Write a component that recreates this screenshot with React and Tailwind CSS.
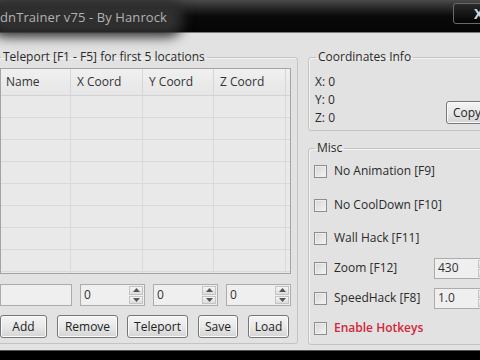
import React from "react";

function Arrow({ up }) {
  return (
    <svg width="7" height="4" viewBox="0 0 7 4">
      {up ? <path d="M0 4 L3.5 0 L7 4 Z" fill="#555" /> : <path d="M0 0 L3.5 4 L7 0 Z" fill="#555" />}
    </svg>
  );
}

function Spin({ value, className = "", h = "h-[22px]" }) {
  return (
    <div className={`flex ${h} border border-[#acacac] bg-[#efefef] ${className}`}>
      <div className="flex-1 flex items-center pl-[3px] text-[12px] text-[#333]">{value}</div>
      <div className="w-[16px] flex flex-col p-[1px] gap-[1px]">
        <div className="flex-1 flex items-center justify-center border border-[#c4c4c4] bg-gradient-to-b from-[#f6f6f6] to-[#dcdcdc]">
          <Arrow up />
        </div>
        <div className="flex-1 flex items-center justify-center border border-[#c4c4c4] bg-gradient-to-b from-[#f6f6f6] to-[#dcdcdc]">
          <Arrow />
        </div>
      </div>
    </div>
  );
}

function Btn({ children, className = "" }) {
  return (
    <div
      className={`h-[23px] flex items-center justify-center rounded-[3px] border border-[#767676] bg-gradient-to-b from-[#f4f4f4] via-[#e9e9e9] to-[#d4d4d4] shadow-[inset_0_0_0_1px_#fbfbfb] text-[12px] text-[#222] ${className}`}
    >
      {children}
    </div>
  );
}

function Check({ label, red = false, children }) {
  return (
    <div className="h-[22px] flex items-center">
      <div className="w-[13px] h-[13px] border border-[#8e8e8e] bg-gradient-to-br from-[#d6d6d6] to-[#f4f4f4] shadow-[inset_0_0_0_1px_#eeeeee]" />
      <div
        className={`ml-[7px] text-[12px] ${children ? "w-[100px]" : ""} ${
          red ? "text-[#d4253a] font-semibold" : "text-[#2a2a2a]"
        }`}
      >
        {label}
      </div>
      {children}
    </div>
  );
}

const cols = "grid grid-cols-[70px_72px_71px_72px_1fr]";

export default function App() {
  const rows = Array.from({ length: 9 });
  return (
    <div className="w-[480px] h-[360px] overflow-hidden bg-black font-['Open_Sans',sans-serif] flex flex-col">
      {/* Title bar */}
      <div className="h-[33px] shrink-0 flex items-center pt-[3px] relative bg-gradient-to-b from-[#4a4a4a] via-[#0a0a0a] to-[#050505] border-b border-[#7a7a7a]">
        <div className="h-[18px] flex items-center pr-[6px] bg-[#2f2f2f] shadow-[0_0_12px_10px_#2f2f2f] rounded-[6px]">
          <span className="text-[13px] text-[#b2b2b2] tracking-[0.1px]">dnTrainer v75 - By Hanrock</span>
        </div>
        <div className="absolute left-[453px] top-[3px] w-[40px] h-[21px] rounded-[3px] border border-[#6a6a6a] bg-gradient-to-b from-[#2a2a2a] to-[#050505] flex items-center pl-[20px]">
          <span className="text-[14px] font-bold text-[#d8d8d8]">X</span>
        </div>
      </div>

      {/* Body */}
      <div className="h-[317px] shrink-0 bg-[#e2e2e2] flex overflow-hidden pt-[16px] text-[#2a2a2a]">
        {/* Left group */}
        <fieldset className="-ml-[6px] w-[304px] shrink-0 h-[295px] border border-[#c3c3c3] rounded-[3px] shadow-[inset_1px_1px_0_#f4f4f4] pl-[5px] pr-[6px] pb-[5px] flex flex-col">
          <legend className="ml-[1px] px-[2px] text-[12px] leading-[16px] text-[#2a2a2a]">
            Teleport [F1 - F5] for first 5 locations
          </legend>
          <div className="mt-[3px] h-[207px] border border-[#a4a4a4] bg-[#e9e9e9] overflow-hidden flex flex-col">
            <div className={`${cols} h-[27px] shrink-0 bg-gradient-to-b from-[#f0f0f0] to-[#e6e6e6] border-b border-[#d2d2d2] text-[12px] text-[#333]`}>
              <div className="pl-[5px] flex items-center border-r border-[#d6d6d6]">Name</div>
              <div className="pl-[6px] flex items-center border-r border-[#d6d6d6]">X Coord</div>
              <div className="pl-[6px] flex items-center border-r border-[#d6d6d6]">Y Coord</div>
              <div className="pl-[6px] flex items-center border-r border-[#d6d6d6]">Z Coord</div>
              <div />
            </div>
            {rows.map((_, i) => (
              <div key={i} className={`${cols} h-[22px] shrink-0 border-b border-[#d9d9d9]`}>
                <div className="border-r border-[#d9d9d9]" />
                <div className="border-r border-[#d9d9d9]" />
                <div className="border-r border-[#d9d9d9]" />
                <div className="border-r border-[#d9d9d9]" />
                <div />
              </div>
            ))}
          </div>
          <div className="mt-[10px] flex">
            <div className="w-[72px] h-[22px] border border-[#acacac] bg-[#efefef]" />
            <Spin value="0" className="ml-[8px] w-[65px]" />
            <Spin value="0" className="ml-[8px] w-[65px]" />
            <Spin value="0" className="ml-[8px] w-[65px]" />
          </div>
          <div className="mt-[9px] flex">
            <Btn className="w-[47px]">Add</Btn>
            <Btn className="ml-[10px] w-[61px]">Remove</Btn>
            <Btn className="ml-[9px] w-[61px]">Teleport</Btn>
            <Btn className="ml-[10px] w-[40px]">Save</Btn>
            <Btn className="ml-[10px] w-[41px]">Load</Btn>
          </div>
        </fieldset>

        {/* Right column */}
        <div className="ml-[10px] w-[200px] shrink-0 flex flex-col">
          <fieldset className="h-[82px] border border-[#c3c3c3] rounded-[3px] shadow-[inset_1px_1px_0_#f4f4f4] pl-[6px] flex">
            <legend className="ml-[1px] px-[2px] text-[12px] leading-[16px]">Coordinates Info</legend>
            <div className="mt-[8px] w-[131px] flex flex-col text-[12px] leading-[18px]">
              <div>X: 0</div>
              <div>Y: 0</div>
              <div>Z: 0</div>
            </div>
            <Btn className="mt-[36px] w-[60px] h-[22px] !justify-start pl-[6px]">Copy</Btn>
          </fieldset>
          <fieldset className="mt-[9px] h-[205px] border border-[#c3c3c3] rounded-[3px] shadow-[inset_1px_1px_0_#f4f4f4] pl-[5px] flex flex-col">
            <legend className="ml-[1px] px-[2px] text-[12px] leading-[16px]">Misc</legend>
            <div className="mt-[4px]">
              <Check label="No Animation [F9]" />
            </div>
            <div className="mt-[12px]">
              <Check label="No CoolDown [F10]" />
            </div>
            <div className="mt-[11px]">
              <Check label="Wall Hack [F11]" />
            </div>
            <div className="mt-[8px]">
              <Check label="Zoom [F12]">
                <Spin value="430" className="w-[60px]" h="h-[21px]" />
              </Check>
            </div>
            <div className="mt-[8px]">
              <Check label="SpeedHack [F8]">
                <Spin value="1.0" className="w-[60px]" h="h-[21px]" />
              </Check>
            </div>
            <div className="mt-[8px]">
              <Check label="Enable Hotkeys" red />
            </div>
          </fieldset>
        </div>
      </div>
      <div className="flex-1 bg-black border-t border-[#555]" />
    </div>
  );
}
